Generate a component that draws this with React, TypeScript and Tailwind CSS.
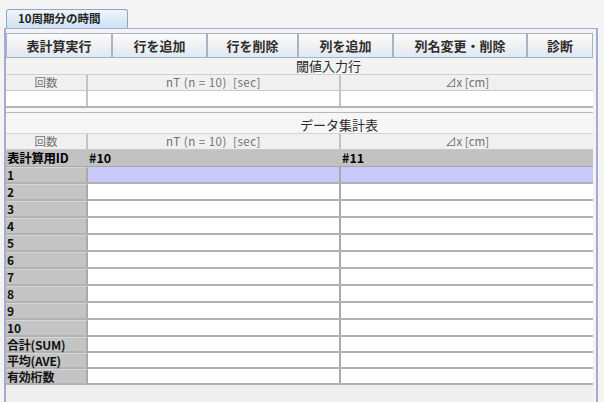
import React from 'react';

const JP = { fontFamily: '"Noto Sans CJK JP", "Liberation Sans", sans-serif' };

const TOOLS: { label: string; w: string }[] = [
  { label: '表計算実行', w: 'w-[106px]' },
  { label: '行を追加', w: 'w-[95px]' },
  { label: '行を削除', w: 'w-[91px]' },
  { label: '列を追加', w: 'w-[95px]' },
  { label: '列名変更・削除', w: 'w-[134px]' },
  { label: '診断', w: 'w-[66px]' },
];

const ROWS = ['1', '2', '3', '4', '5', '6', '7', '8', '9', '10', '合計(SUM)', '平均(AVE)', '有効桁数'];

const HeaderRow = () => (
  <div className="flex h-[16px] bg-[#f0f0f0] border-b border-[#c8c8c8] text-[11.5px] leading-none text-[#707070]">
    <div className="w-[82px] flex items-center justify-center border-r-2 border-[#c4c4c4]">回数</div>
    <div className="w-[253px] flex items-center justify-center border-r-2 border-[#c4c4c4] tracking-[0.5px]">nT (n = 10)&nbsp; [sec]</div>
    <div className="flex-1 flex items-center justify-center">⊿x [cm]</div>
  </div>
);

const App: React.FC = () => {
  return (
    <div className="w-[604px] h-[402px] bg-[#f4f4f4] overflow-hidden pt-[9px]" style={JP}>
      {/* Tab */}
      <div className="ml-[6px] w-[122px] h-[19px] rounded-t-[3px] border border-b-0 border-[#8fa6c2] bg-gradient-to-b from-[#eef5fc] to-[#cfe1f3] flex items-center pl-[11px] text-[11.5px] font-bold text-[#222]">
        10周期分の時間
      </div>

      {/* Panel */}
      <div className="ml-[4px] w-[594px] h-[400px] border-t border-l-2 border-r-2 border-[#a3abd4] bg-[#f3f3f3] pt-[4px] pr-[3px]">
        {/* Toolbar */}
        <div className="flex h-[25px]">
          {TOOLS.map(t => (
            <div
              key={t.label}
              className={`${t.w} flex items-center justify-center border border-[#aab3c2] bg-gradient-to-b from-[#fbfbfb] via-[#f1f1f1] to-[#dce9f6] text-[13px] font-bold text-[#2c2c2c]`}
            >
              {t.label}
            </div>
          ))}
        </div>

        {/* Threshold input section */}
        <div className="h-[17px] flex items-center pl-[290px] text-[13px] text-[#2a2a2a] border-b border-[#d0d0d0]">閾値入力行</div>
        <HeaderRow />
        <div className="flex h-[17px] bg-white border-b-2 border-[#b4b4b4]">
          <div className="w-[82px] border-r-2 border-[#c4c4c4]" />
          <div className="w-[253px] border-r-2 border-[#c4c4c4]" />
          <div className="flex-1" />
        </div>
        <div className="h-[5px] bg-[#f7f7f7] border-b border-[#b8b8b8]" />

        {/* Data summary section */}
        <div className="h-[21px] flex items-center pt-[4px] pl-[294px] text-[13px] text-[#2a2a2a] bg-[#f6f6f6] border-b border-[#d4d4d4]">データ集計表</div>
        <HeaderRow />
        <div className="flex h-[17px] bg-[#c2c2c2] border-b border-[#a8a8a8] text-[12.5px] font-bold text-black leading-none">
          <div className="w-[82px] flex items-center pl-[1px] tracking-[-0.3px]">表計算用ID</div>
          <div className="w-[253px] flex items-center pl-[1px]">#10</div>
          <div className="flex-1 flex items-center pl-[1px]">#11</div>
        </div>
        {ROWS.map((r, i) => (
          <div key={r} className={`flex ${i < 10 ? 'h-[17px]' : 'h-[16px]'} border-b-2 border-[#b2b2b2]`}>
            <div className="w-[82px] flex items-center pl-px bg-[#c4c4c4] border-t border-[#d6d6d6] border-r-2 border-r-[#a9a9a9] text-[12px] font-bold text-[#111] leading-none tracking-[-0.2px]">
              {r}
            </div>
            <div className={`w-[253px] border-r-2 border-[#a9a9a9] ${i === 0 ? 'bg-[#c9c9fa]' : 'bg-white'}`} />
            <div className={`flex-1 ${i === 0 ? 'bg-[#c9c9fa]' : 'bg-white'}`} />
          </div>
        ))}
        <div className="h-[20px] bg-[#efefef]" />
      </div>
    </div>
  );
};

export default App;
